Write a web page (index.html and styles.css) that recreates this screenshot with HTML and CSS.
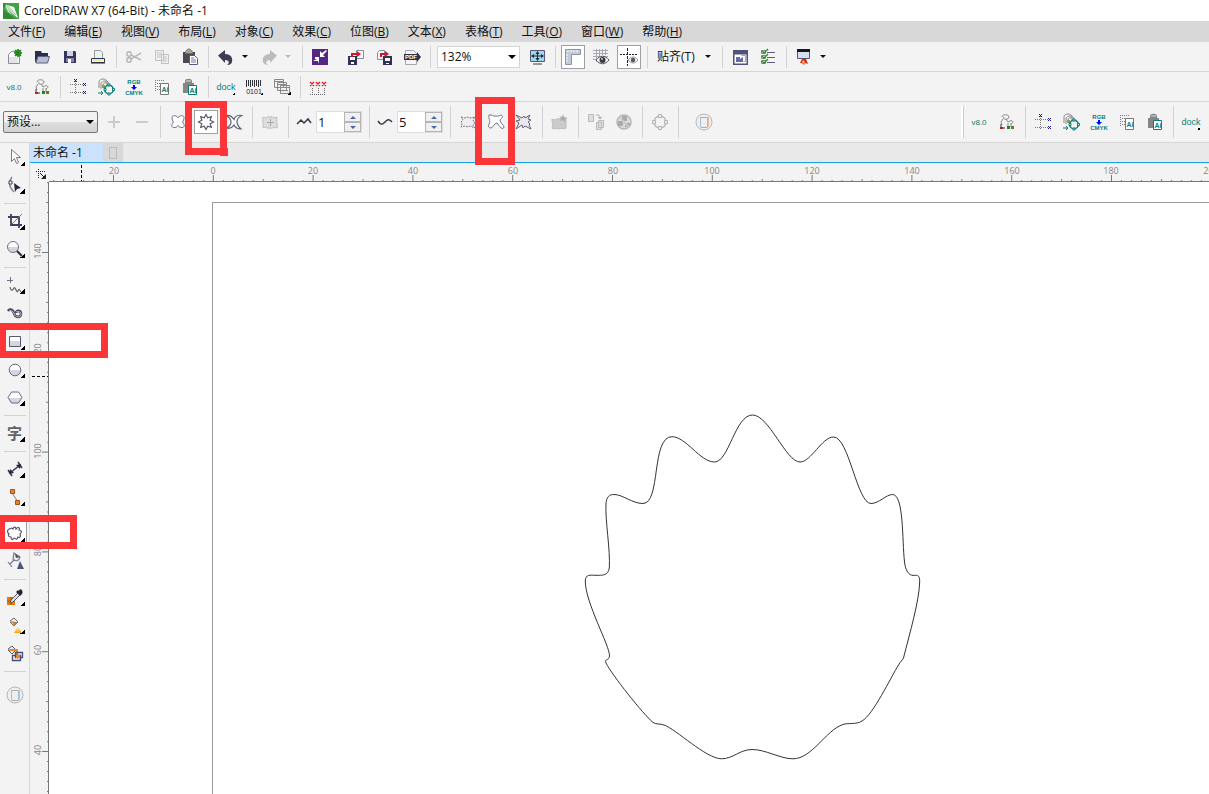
FILE: index.html
```html
<!DOCTYPE html>
<html lang="zh-CN">
<head>
<meta charset="utf-8">
<title>CorelDRAW X7 (64-Bit) - 未命名 -1</title>
<link rel="stylesheet" href="styles.css">
</head>
<body>
<svg class="sprite" aria-hidden="true">
  <defs>
    <linearGradient id="shade" x1="0" y1="0" x2="0" y2="1"><stop offset=".5" stop-color="#fff"/><stop offset=".5" stop-color="#d4d6e2"/></linearGradient>
    <linearGradient id="gold" x1="0" y1="0" x2="0" y2="1"><stop offset="0" stop-color="#fff"/><stop offset="1" stop-color="#f4a000"/></linearGradient>
    <pattern id="ticks-x" width="99.8" height="8" x="64" y="11" patternUnits="userSpaceOnUse">
      <path d="M.5 1v6M10.500 6v1M20.500 6v1M30.500 6v1M40.500 6v1M50.500 5v2M60.500 6v1M70.500 6v1M80.500 6v1M90.500 6v1" stroke="#777"/>
    </pattern>
    <pattern id="ticks-y" width="8" height="99.8" x="11" y="70" patternUnits="userSpaceOnUse">
      <path d="M1 .5h6M6 10.500h1M6 20.500h1M6 30.500h1M6 40.500h1M5 50.500h2M6 60.500h1M6 70.500h1M6 80.500h1M6 90.500h1" stroke="#777"/>
    </pattern>
  </defs>

  <symbol id="new" viewBox="0 0 18 18"><path d="M3.500 6.500l3-3h8v12h-11z" fill="#fff" stroke="#8c8c94"/><path d="M4 9h9v6H4z" fill="#e3e3e8"/><path d="M13 1l1 2 2-1-1 2 2 1-2 1 1 2-2-1-1 2-1-2-2 1 1-2-2-1 2-1-1-2 2 1z" fill="#1f8a16" stroke="#1f8a16"/></symbol>
  <symbol id="open" viewBox="0 0 18 18"><path d="M2 3h6l1 2h6v4H5l-3 6z" fill="#2c2c4c"/><path d="M5 8.500h11.500l-2 6.500H3z" fill="#b9bdd4" stroke="#60617f"/></symbol>
  <symbol id="save" viewBox="0 0 18 18"><path d="M3 3h11l1 1v11H3z" fill="#34345c"/><path d="M6 3h6v5H6z" fill="#cfd2e4"/><path d="M5 10h8v4H5z" fill="#8587a8"/><path d="M7 11h3v4H7z" fill="#fff"/></symbol>
  <symbol id="print" viewBox="0 0 18 18"><path d="M5.500 10V2.500h6l2 2V10" fill="#e8f4f4" stroke="#999"/><path d="M2.500 10.500h13v4h-13z" fill="#f4f4f4" stroke="#34344c"/><path d="M4 12h10" stroke="#e6db50"/><path d="M2 15h14" stroke="#24243c"/></symbol>
  <symbol id="cut" viewBox="0 0 18 18"><path d="M6 7l10 5M6 11l10-6" stroke="#bbb" stroke-width="1.600"/><circle cx="4" cy="6" r="2.200" fill="none" stroke="#b5b5b5" stroke-width="1.400"/><circle cx="4" cy="12" r="2.200" fill="none" stroke="#b5b5b5" stroke-width="1.400"/></symbol>
  <symbol id="copy" viewBox="0 0 18 18"><path d="M2.500 2.500h8v10h-8zM8.500 6.500h7v9h-7z" fill="#f0f0f0" stroke="#c0c0c0"/><path d="M4 5h5M4 7h4M4 9h4M10 9h4M10 11h4M10 13h4" stroke="#c4c4c4"/></symbol>
  <symbol id="paste" viewBox="0 0 18 18"><path d="M2 4h12v11H2z" fill="#4c4850"/><path d="M4.500 5.500c0-6 7-6 7 0z" fill="#a9a58c" stroke="#777"/><path d="M8.500 7.500h5l3 3v6h-8z" fill="#fff" stroke="#58588c"/><path d="M10 10h3M10 12h5M10 14h5" stroke="#7779a5"/></symbol>
  <symbol id="undo" viewBox="0 0 18 18"><path d="M1 7.500L8 2v4c6 0 8 4 7 8-1 3-4 3-5 3 3-2 2-5-2-5v3z" fill="currentColor"/></symbol>
  <symbol id="redo" viewBox="0 0 18 18"><path d="M17 7.500L10 2v4C4 6 2 10 3 14c1 3 4 3 5 3-3-2-2-5 2-5v3z" fill="currentColor"/></symbol>
  <symbol id="corner" viewBox="0 0 18 18"><path d="M1 1h16v16H1z" fill="#542783"/><path d="M9 3v6h5l-2-2 4-4-1-1-4 3zM8 9v7l-1-3H2l4-2H4V9z" fill="#fff"/></symbol>
  <symbol id="import" viewBox="0 0 18 18"><path d="M9.500 2.500h7v8h-7z" fill="#f6f6fa" stroke="#8b8ba0"/><path d="M1 8h9v9H1z" fill="#303058"/><path d="M3 9h5v3H3zM4 14h3v2H4z" fill="#fff"/><path d="M4 9V5h6V3l4 3-4 3V7H6v2z" fill="#d51928"/></symbol>
  <symbol id="export" viewBox="0 0 18 18"><path d="M2.500 4.500l2-2h5v9h-7z" fill="#f6f6fa" stroke="#8b8ba0"/><path d="M8 8h9v9H8z" fill="#303058"/><path d="M10 10h5v3h-5zM11 15h3v1h-3z" fill="#fff"/><path d="M5 9V5h5V3l4 3-4 3V7H7v2z" fill="#d51928"/></symbol>
  <symbol id="pdf" viewBox="0 0 18 18"><path d="M2.500 16.500v-14h8l3 3v11z" fill="#f6f6f8" stroke="#a5a5ad"/><path d="M1 6h13V4l4 5-4 5v-2H1z" fill="#303044"/></symbol>
  <symbol id="fullscreen" viewBox="0 0 18 18"><path d="M2.500 2.500h14v11h-14z" fill="#9fd8e8" stroke="#555875"/><path d="M5 15h9v2H5z" fill="#999"/><path d="M9.500 4v8M5 8h9" stroke="#24243c"/><path d="M7.500 6l2-3 2 3zM7.500 10l2 3 2-3zM6 6L3 8l3 2zM13 6l3 2-3 2z" fill="#24243c"/></symbol>
  <symbol id="rulers" viewBox="0 0 18 18"><path d="M1.500 1.500h15v5h-9v10h-6z" fill="#c3cada" stroke="#8c94aa"/><path d="M4 2v2M7 2v2M10 2v2M13 2v2M2 7h2M2 10h2M2 13h2" stroke="#fff"/></symbol>
  <symbol id="grid-eye" viewBox="0 0 18 18"><path d="M1 2.500h15M1 5.500h15M1 8.500h15M1 11.500h5M4.500 1v13M7.500 1v9M10.500 1v6M13.500 1v6" stroke="#a6a6b4"/><path d="M4 12c4-5 9-5 13 0-4 5-9 5-13 0z" fill="#f4f4f4" stroke="#555"/><circle cx="10.500" cy="12" r="3" fill="#383844"/><circle cx="10" cy="11" r="1" fill="#ccc"/></symbol>
  <symbol id="guide-eye" viewBox="0 0 18 18"><path d="M0 6.500h18" stroke="#222" stroke-dasharray="2 1"/><path d="M7.500 0v18" stroke="#222" stroke-dasharray="3 1"/><path d="M8 12c3-4 7-4 10 0-3 4-7 4-10 0z" fill="#eee" stroke="#999"/><circle cx="13" cy="12" r="2.200" fill="#55556a"/></symbol>
  <symbol id="launch" viewBox="0 0 18 18"><path d="M2 2h15v15H2z" fill="#50527a"/><path d="M3.500 6.500h12v9h-12z" fill="#fff"/><path d="M5 9h4v2l3-2v5H5z" fill="#676ca0"/><path d="M10.500 7.500h4v6h-2" fill="none" stroke="#9ba1c3"/></symbol>
  <symbol id="options" viewBox="0 0 18 18"><path d="M8 4.500h8M8 9.500h8M8 14.500h8" stroke="#5e5e80"/><path d="M2.500 2.500h4v3h-4zM2.500 7.500h4v3h-4zM2.500 12.500h4v3h-4z" fill="#fff" stroke="#888"/><path d="M3 3l2 2 4-4M3 8l2 2 4-4M3 13l2 2 4-4" fill="none" stroke="#278a20" stroke-width="1.300"/></symbol>
  <symbol id="display" viewBox="0 0 18 18"><path d="M2.500 1.500h12v9h-12z" fill="#d7ddee" stroke="#55566d"/><path d="M2 1h13v3H2z" fill="#15151f"/><path d="M5 15l2-4h4l2 5-3-1-1 2-2-2z" fill="#e22020"/><path d="M8 12l2 2-1 2-2-2z" fill="#ffcb2e"/></symbol>

  <symbol id="tree" viewBox="0 0 18 18"><path d="M4 4c0-3 7-3 7 0s-7 3-5 0M5 6l-2 3 1 3M8 6l2 3M10 9c4-3 7 0 3 2M10 10v3M13 10v4" fill="none" stroke="#888"/><path d="M3 11v4h4" fill="none" stroke="#777" stroke-width="1.500"/><path d="M2 14h3v2H2z" fill="#a22"/><path d="M9 13h3v3H9z" fill="#183"/><path d="M13 13h3v3h-3z" fill="#886c20"/></symbol>
  <symbol id="nodes" viewBox="0 0 18 18"><path d="M1 6.500h14M1 14.500h14M6.500 3v14" stroke="#777" stroke-dasharray="1 1"/><path d="M5 1l3 3M8 1L5 4M14 5l3 3M17 5l-3 3M14 13l3 3M17 13l-3 3" stroke="#15158a"/></symbol>
  <symbol id="contour" viewBox="0 0 18 18"><path d="M2 10V4c0-4 8-4 8 0v4M4 11V6c0-4 8-4 8 0M6 9V7c0-3 5-3 5 0" fill="none" stroke="#888"/><path d="M5 7h3v3H5z" fill="#9c9c3b"/><circle cx="12" cy="11.500" r="4.300" fill="none" stroke="#087f7b" stroke-width="1.600"/><path d="M1 15h5M4 13l2 2-2 2" fill="none" stroke="#087f7b"/><path d="M11 6h2v2h-2zM15.500 10.500h2v2h-2zM11 15h2v2h-2zM7 10.500h2v2H7z" fill="#f3f3f3" stroke="#087f7b"/></symbol>
  <symbol id="arrow-down" viewBox="0 0 18 18"><path d="M8 7h2v2h2l-3 3-3-3h2z" fill="#00f"/></symbol>
  <symbol id="copy-ai" viewBox="0 0 18 18"><path d="M2 2.500h9M2.500 4v10M4 5.500h3M4 8.500h3M4 11.500h3" stroke="#777" stroke-dasharray="1 1"/><path d="M7.500 5.500h8v11h-8z" fill="#fff" stroke="#777"/></symbol>
  <symbol id="paste-ai" viewBox="0 0 18 18"><path d="M2 5h11v10H2zM4 5V3c0-3 7-3 7 0v2z" fill="#858585"/><path d="M5 3h5" stroke="#ddd"/><path d="M7.500 7.500h8v9h-8z" fill="#fff" stroke="#087f7b"/></symbol>
  <symbol id="binary" viewBox="0 0 18 18"><path d="M1.500 2v7M3.500 2v6M5.500 2v7M7.500 2v6M9.500 2v7M11.500 2v6M13.500 2v7M15.500 2v6" stroke="#303038"/></symbol>
  <symbol id="stack" viewBox="0 0 18 18"><path d="M1.500 1.500h9v8h-9zM4.500 4.500h9v8h-9zM7.500 7.500h9v8h-9z" fill="#f3f3f3" stroke="#888"/><path d="M2 3.500h8M5 6.500h8M8 9.500h8M9 12l2 1M13 12l2 1" stroke="#888"/></symbol>
  <symbol id="red-x" viewBox="0 0 18 18"><path d="M1 4l4 4M5 4L1 8M7 4l4 4M11 4L7 8M13 4l4 4M17 4l-4 4" stroke="#f11212" stroke-width="1.200"/><path d="M1 16.500h16M3.500 10v6M9.500 10v6M15.500 10v6" stroke="#666" stroke-dasharray="1 1"/></symbol>

  <symbol id="plus" viewBox="0 0 18 18"><path d="M9 3v12M3 9h12" stroke="#ccc" stroke-width="2"/></symbol>
  <symbol id="minus" viewBox="0 0 18 18"><path d="M3 9h12" stroke="#ccc" stroke-width="2"/></symbol>
  <symbol id="pushpull" viewBox="0 0 18 18"><path d="M9 5C8 2 3 2 3 4.500c0 2 .5 3 1.500 4.500C3 11 2.500 12 3 13.500c1 2 5 1 6-1 1 2 5 3 6 1 .5-1.500 0-2.500-1.500-4.500C14.500 7.500 15 6.500 15 4.500 15 2 10 2 9 5z" fill="#fff" stroke="#6e7085"/></symbol>
  <symbol id="zipper" viewBox="0 0 18 18"><path d="M9 1.500l1.700 3.300 3.600-1.100-1.100 3.600L16.500 9l-3.300 1.700 1.100 3.600-3.600-1.100L9 16.500l-1.700-3.300-3.600 1.100 1.100-3.600L1.500 9l3.300-1.700-1.100-3.600 3.600 1.100z" fill="#fff" stroke="#55586e" stroke-width="1.200"/></symbol>
  <symbol id="twister" viewBox="0 0 18 18"><path d="M1 2.500c4-1 6 1 8 4 1-3 4-5 8-4-3 1-5 4-5 6.500 0 3 2 5 4 7-4 0-6-2-7-4-2 3-4 4-8 3 3-1 5-3 5-6S4 4 1 2.500z" fill="#fff" stroke="#5c5f76" stroke-width="1.200"/></symbol>
  <symbol id="center" viewBox="0 0 18 18"><path d="M2 4c3 2 4-1 7 0 3-1 4 2 7 0-1 4 1 7 0 11-3-2-4 1-7 0-3 1-4-2-7 0 1-4-1-7 0-11z" fill="#ddd" stroke="#c0c0c0"/><path d="M9.500 6v7M6 9.500h7" stroke="#aaa"/></symbol>
  <symbol id="amp" viewBox="0 0 18 18"><path d="M2 11l4-4 3 3 4-4 3 4" fill="none" stroke="#38384f" stroke-width="1.500"/></symbol>
  <symbol id="freq" viewBox="0 0 18 18"><path d="M2 8c3 5 5 3 7 1s4-4 7 0" fill="none" stroke="#38384f" stroke-width="1.500"/></symbol>
  <symbol id="random" viewBox="0 0 18 18"><path d="M2 4l4 1 2-1 3 1 5-1-2 3 1 2 1 1-2 2 2 3-5-2-2 1-3-1-4 1 1-3-1-2 2-2z" fill="#eee" stroke="#72748a" stroke-dasharray="2 1"/></symbol>
  <symbol id="smooth" viewBox="0 0 18 18"><path d="M2 2c3-1 4 2 7 1 2 1 4-1 5-1 3 1 1 3-1 5 0 3 4 5 4 7-1 4-5-1-7-4-3 0-4 5-6 5s-3-1-2-4c2-4-1-5 0-9z" fill="#fff" stroke="#72748a"/></symbol>
  <symbol id="local" viewBox="0 0 18 18"><path d="M1 2l6 3 2-2 1 2 5-3-2 4 3 1-3 2 2 2-1 1 2 4-6-3-2 2-1-3-6 4 3-6-3-2 4-1z" fill="#e9e9ee" stroke="#5f6179"/></symbol>
  <symbol id="convert" viewBox="0 0 18 18"><path d="M1 6c4 2 4-1 7 0 3-1 4 1 7 0v9c-3 2-4-1-7 1-3-2-4 1-7-1 2-3 0-5 0-9z" fill="#ccc" stroke="#bbb"/><path d="M12 1l1 3 4 1-3 1v3l-2-2-3 1 1-3-2-2 3 1z" fill="#aaa"/></symbol>
  <symbol id="copy-prop" viewBox="0 0 18 18"><path d="M1.500 1.500h5v7h-5zM9.500 9.500h5v7h-5zM11.500 7.500h5v7h-5z" fill="#ddd" stroke="#bbb"/><path d="M9 2c3 0 4 0 4 3M11 4l2 2 2-2" fill="none" stroke="#aaa"/></symbol>
  <symbol id="clear" viewBox="0 0 18 18"><circle cx="9" cy="9" r="7" fill="#ddd" stroke="#b7b7b7" stroke-width="1.500"/><path d="M7 3h5v5H7zM3 8h5v5H3zM10 10h5v4h-5z" fill="#aaa"/><path d="M4 4l10 10" stroke="#ccc" stroke-width="2"/></symbol>
  <symbol id="curve" viewBox="0 0 18 18"><circle cx="9" cy="9" r="6" fill="none" stroke="#bbb" stroke-width="1.500"/><path d="M7.500 1.500h3v3h-3zM1.500 7.500h3v3h-3zM13.500 7.500h3v3h-3zM7.500 13.500h3v3h-3z" fill="#eee" stroke="#b2b2b2"/></symbol>
  <symbol id="custom" viewBox="0 0 18 18"><circle cx="9" cy="9" r="8" fill="#eee" stroke="#b7b7b7"/><path d="M5.500 4v10.500M12.500 4v10.500" stroke="#9fc0d7"/><path d="M6 4.500h6M6 14.500h6" stroke="#b2aaa5"/><path d="M13.500 4v10" stroke="#e4bda0"/></symbol>

  <symbol id="pick" viewBox="0 0 18 18"><path d="M5.500 1.500v12l3-3 2 5 2-1-2-5h4z" fill="#fff" stroke="#77798e"/></symbol>
  <symbol id="shape" viewBox="0 0 18 18"><path d="M6 1c-4 5-3 10 2 15" fill="none" stroke="#868898" stroke-width="1.500"/><path d="M3 5h3v3H3z" fill="#fff" stroke="#444"/><path d="M8 7l7 5-4 1-2 3z" fill="#26263d"/></symbol>
  <symbol id="crop" viewBox="0 0 18 18"><path d="M5 2v11h11M2 5h11v11" fill="none" stroke="#40405a" stroke-width="1.800"/><path d="M6 12l10-10" stroke="#77798c"/></symbol>
  <symbol id="magnify" viewBox="0 0 18 18"><circle cx="7" cy="7" r="5.500" fill="url(#shade)" stroke="#717386"/><path d="M11 11l5 5" stroke="#333346" stroke-width="2.200"/></symbol>
  <symbol id="freehand" viewBox="0 0 18 18"><path d="M4.500 1v6M1 4.500h6" stroke="#707284"/><path d="M4 11c1 5 3 3 4 1s3 6 4 3 2-1 3 1" fill="none" stroke="#606276" stroke-width="1.200"/></symbol>
  <symbol id="artistic" viewBox="0 0 18 18"><path d="M2 7c2-3 5-1 6 2 1 5 7 5 7 1 0-4-5-4-5-1" fill="none" stroke="#44465c" stroke-width="2.600"/><path d="M3 7c2-1 4 0 5 2 1 5 7 5 7 1 0-3-4-3-5-2" fill="none" stroke="#d6d7e0" stroke-width=".8"/></symbol>
  <symbol id="rect" viewBox="0 0 18 18"><path d="M3.500 4.500h11v10h-11z" fill="url(#shade)" stroke="#55586e"/></symbol>
  <symbol id="ellipse" viewBox="0 0 18 18"><circle cx="9" cy="10" r="5.800" fill="url(#shade)" stroke="#696b7e"/></symbol>
  <symbol id="polygon" viewBox="0 0 18 18"><path d="M5.500 4h7l3.500 5.500-3.500 5.500h-7L2 9.500z" fill="url(#shade)" stroke="#696b7e"/></symbol>
  <symbol id="dimension" viewBox="0 0 18 18"><path d="M4 13L14 5" stroke="#383850" stroke-width="1.600"/><path d="M2 10l4 6M12 2l4 6" stroke="#383850" stroke-width="1.500"/><path d="M3 14l1-5 4 4zM15 4l-1 5-4-4z" fill="#26263d"/></symbol>
  <symbol id="connector" viewBox="0 0 18 18"><path d="M6 5l6 9" stroke="#777a92"/><path d="M4.500 1.500h4v4h-4zM9.500 12.500h4v4h-4z" fill="#f98200" stroke="#a34d2e"/></symbol>
  <symbol id="distort" viewBox="0 0 18 18"><path d="M3 5c2 0 2-2 4 0 1-3 3-2 3 0 3-3 4-1 3 1 4 1 2 3 1 4 1 3 0 4-2 3-1 4-3 1-4 1-2 3-3 1-3-1-3 0-3-2-2-3-2-2-2-4 0-5z" fill="#fff" stroke="#55586e" stroke-width="1.200"/></symbol>
  <symbol id="transparent" viewBox="0 0 18 18"><path d="M8 1l6 4c-1 4-4 5-7 2zM8 8l-4 4M2 10l4 5" fill="#ebebf0" stroke="#77798d" stroke-width="1.200"/><path d="M14 9l4 8h-7z" fill="#4e5678"/><path d="M9 2l5 3-4 1z" fill="#4b4d60"/></symbol>
  <symbol id="eyedropper" viewBox="0 0 18 18"><path d="M1 9h8v8H1z" fill="#ef7900"/><path d="M5 9v8M1 13h8" stroke="#b84c00"/><path d="M5 12l7-7 2 2-7 7-3 1z" fill="#dedfe6" stroke="#555"/><path d="M10 4l2-2 4 4-2 2zM13 3c1-4 5 0 3 3z" fill="#252535"/></symbol>
  <symbol id="fill" viewBox="0 0 18 18"><path d="M4 5l4-3 4 4-4 4-4-4c3 0 4 0 7 1" fill="#eee" stroke="#696b79"/><path d="M6 6l5 1-3 3z" fill="#e97a0c"/><path d="M12 10l4 7H8z" fill="url(#gold)"/></symbol>
  <symbol id="smart-fill" viewBox="0 0 18 18"><path d="M2 5l4-3 4 4-4 4-4-4c3 0 4 0 7 1" fill="#eee" stroke="#55576a"/><path d="M4 6h7v6" fill="none" stroke="#ef8520" stroke-width="2"/><path d="M6.500 11.500h8v5h-8zM9.500 8.500h7v5h-7z" fill="none" stroke="#484d76" stroke-width="1.300"/><path d="M10 11h4v3h-4z" fill="#f28315"/></symbol>
</svg>

<header class="titlebar">
  <svg class="logo" viewBox="0 0 16 16" role="img" aria-label="CorelDRAW"><path d="M0 0h16v16H0z" fill="#43a047"/><path d="M1 1l10 3 4 11L5 9z" fill="#f3faf2"/><path d="M1 1l11 12M3 1l10 11M2 5l11 9" stroke="#5ba957" stroke-width=".7"/><path d="M0 0h3l-1 5-2-1zM0 7l12 9H0z" fill="#348b35"/></svg>
  <span>CorelDRAW X7 (64-Bit) - 未命名 -1</span>
</header>

<nav class="menubar" aria-label="菜单">
  <button>文件(<u>F</u>)</button><button>编辑(<u>E</u>)</button><button>视图(<u>V</u>)</button><button>布局(<u>L</u>)</button><button>对象(<u>C</u>)</button><button>效果(<u>C</u>)</button><button>位图(<u>B</u>)</button><button>文本(<u>X</u>)</button><button>表格(<u>T</u>)</button><button>工具(<u>O</u>)</button><button>窗口(<u>W</u>)</button><button>帮助(<u>H</u>)</button>
</nav>

<div class="toolbar" role="toolbar" aria-label="标准">
  <button class="tool" aria-label="新建"><svg><use href="#new"/></svg></button>
  <button class="tool" aria-label="打开"><svg><use href="#open"/></svg></button>
  <button class="tool" aria-label="保存"><svg><use href="#save"/></svg></button>
  <button class="tool" aria-label="打印"><svg><use href="#print"/></svg></button>
  <i class="sep"></i>
  <button class="tool" aria-label="剪切"><svg><use href="#cut"/></svg></button>
  <button class="tool" aria-label="复制"><svg><use href="#copy"/></svg></button>
  <button class="tool" aria-label="粘贴"><svg><use href="#paste"/></svg></button>
  <i class="sep"></i>
  <button class="tool undo" aria-label="撤消"><svg><use href="#undo"/></svg></button>
  <button class="drop" aria-label="撤消列表"></button>
  <button class="tool muted" aria-label="重做"><svg><use href="#redo"/></svg></button>
  <button class="drop muted" aria-label="重做列表"></button>
  <i class="sep"></i>
  <button class="tool" aria-label="搜索内容"><svg><use href="#corner"/></svg></button>
  <i class="gap"></i>
  <button class="tool" aria-label="导入"><svg><use href="#import"/></svg></button>
  <button class="tool" aria-label="导出"><svg><use href="#export"/></svg></button>
  <button class="tool" aria-label="发布为 PDF"><svg><use href="#pdf"/><text x="8" y="11" class="glyph glyph-pdf">PDF</text></svg></button>
  <i class="sep"></i>
  <label class="combo zoom"><select aria-label="缩放级别"><option>132%</option><option>100%</option><option>200%</option></select></label>
  <button class="tool" aria-label="全屏预览"><svg><use href="#fullscreen"/></svg></button>
  <i class="sep"></i>
  <button class="tool pressed" aria-label="显示标尺"><svg><use href="#rulers"/></svg></button>
  <button class="tool" aria-label="显示网格"><svg><use href="#grid-eye"/></svg></button>
  <button class="tool pressed" aria-label="显示辅助线"><svg><use href="#guide-eye"/></svg></button>
  <i class="sep"></i>
  <button class="snap">贴齐(T)</button>
  <button class="drop" aria-label="贴齐列表"></button>
  <i class="sep"></i>
  <button class="tool" aria-label="欢迎屏幕"><svg><use href="#launch"/></svg></button>
  <button class="tool" aria-label="选项"><svg><use href="#options"/></svg></button>
  <i class="sep"></i>
  <button class="tool" aria-label="应用程序启动器"><svg><use href="#display"/></svg></button>
  <button class="drop" aria-label="启动器列表"></button>
</div>

<div class="toolbar" role="toolbar" aria-label="插件">
  <button class="tool" aria-label="版本"><svg><text x="9" y="12" class="glyph glyph-teal">v8.0</text></svg></button>
  <button class="tool" aria-label="结构"><svg><use href="#tree"/></svg></button>
  <i class="sep"></i>
  <button class="tool" aria-label="节点"><svg><use href="#nodes"/></svg></button>
  <button class="tool" aria-label="轮廓"><svg><use href="#contour"/></svg></button>
  <button class="tool" aria-label="颜色转换"><svg><text x="9" y="6" class="glyph glyph-rgb">RGB</text><use href="#arrow-down"/><text x="9" y="17" class="glyph glyph-rgb">CMYK</text></svg></button>
  <button class="tool" aria-label="复制到 Ai"><svg><use href="#copy-ai"/><text x="12" y="14" class="glyph glyph-ai">Ai</text></svg></button>
  <button class="tool" aria-label="从 Ai 粘贴"><svg><use href="#paste-ai"/><text x="12" y="15" class="glyph glyph-ai">Ai</text></svg></button>
  <i class="sep"></i>
  <button class="tool fly" aria-label="泊坞窗"><svg><text x="9" y="12" class="glyph glyph-dock">dock</text></svg></button>
  <button class="tool fly" aria-label="条码"><svg><use href="#binary"/><text x="9" y="16" class="glyph glyph-bin">0101</text></svg></button>
  <button class="tool fly" aria-label="窗口"><svg><use href="#stack"/></svg></button>
  <i class="sep"></i>
  <button class="tool" aria-label="标记"><svg><use href="#red-x"/></svg></button>
</div>

<div class="toolbar property" role="toolbar" aria-label="属性栏">
  <label class="combo preset"><select aria-label="预设"><option>预设...</option></select></label>
  <button class="tool" aria-label="添加预设"><svg><use href="#plus"/></svg></button>
  <button class="tool" aria-label="删除预设"><svg><use href="#minus"/></svg></button>
  <i class="sep"></i>
  <button class="tool" aria-label="推拉变形"><svg><use href="#pushpull"/></svg></button>
  <button class="tool pressed marked" aria-label="拉链变形"><svg><use href="#zipper"/></svg></button>
  <button class="tool" aria-label="扭曲变形"><svg><use href="#twister"/></svg></button>
  <i class="sep"></i>
  <button class="tool" aria-label="居中变形"><svg><use href="#center"/></svg></button>
  <i class="sep"></i>
  <label class="field-icon" for="amplitude" aria-label="拉链振幅"><svg><use href="#amp"/></svg></label>
  <span class="spin"><input id="amplitude" value="1"><span><button aria-label="增加振幅"></button><button aria-label="减少振幅"></button></span></span>
  <i class="sep"></i>
  <label class="field-icon" for="frequency" aria-label="拉链频率"><svg><use href="#freq"/></svg></label>
  <span class="spin"><input id="frequency" value="5"><span><button aria-label="增加频率"></button><button aria-label="减少频率"></button></span></span>
  <i class="sep"></i>
  <button class="tool" aria-label="随机变形"><svg><use href="#random"/></svg></button>
  <button class="tool marked-tall" aria-label="平滑变形"><svg><use href="#smooth"/></svg></button>
  <button class="tool" aria-label="局限变形"><svg><use href="#local"/></svg></button>
  <i class="sep"></i>
  <button class="tool" aria-label="添加新的变形"><svg><use href="#convert"/></svg></button>
  <i class="sep"></i>
  <button class="tool" aria-label="复制变形属性"><svg><use href="#copy-prop"/></svg></button>
  <button class="tool" aria-label="清除变形"><svg><use href="#clear"/></svg></button>
  <i class="sep"></i>
  <button class="tool" aria-label="转换为曲线"><svg><use href="#curve"/></svg></button>
  <i class="sep"></i>
  <i class="gap"></i>
  <button class="tool" aria-label="快速自定义"><svg><use href="#custom"/></svg></button>
  <div class="docked">
    <button class="tool" aria-label="版本"><svg><text x="9" y="12" class="glyph glyph-teal">v8.0</text></svg></button>
    <button class="tool" aria-label="结构"><svg><use href="#tree"/></svg></button>
    <i class="sep"></i>
    <button class="tool" aria-label="节点"><svg><use href="#nodes"/></svg></button>
    <button class="tool" aria-label="轮廓"><svg><use href="#contour"/></svg></button>
    <button class="tool" aria-label="颜色转换"><svg><text x="9" y="6" class="glyph glyph-rgb">RGB</text><use href="#arrow-down"/><text x="9" y="17" class="glyph glyph-rgb">CMYK</text></svg></button>
    <button class="tool" aria-label="复制到 Ai"><svg><use href="#copy-ai"/><text x="12" y="14" class="glyph glyph-ai">Ai</text></svg></button>
    <button class="tool" aria-label="从 Ai 粘贴"><svg><use href="#paste-ai"/><text x="12" y="15" class="glyph glyph-ai">Ai</text></svg></button>
    <i class="sep"></i>
    <button class="tool fly" aria-label="泊坞窗"><svg><text x="9" y="12" class="glyph glyph-dock">dock</text></svg></button>
  </div>
</div>

<main class="workspace">
  <div class="toolbox" role="toolbar" aria-label="工具箱">
    <button class="tool fly" aria-label="选择"><svg><use href="#pick"/></svg></button>
    <button class="tool fly" aria-label="形状"><svg><use href="#shape"/></svg></button>
    <i class="sep"></i>
    <button class="tool fly" aria-label="裁剪"><svg><use href="#crop"/></svg></button>
    <button class="tool fly" aria-label="缩放"><svg><use href="#magnify"/></svg></button>
    <i class="sep"></i>
    <button class="tool fly" aria-label="手绘"><svg><use href="#freehand"/></svg></button>
    <button class="tool" aria-label="艺术笔"><svg><use href="#artistic"/></svg></button>
    <button class="tool fly marked-rect" aria-label="矩形"><svg><use href="#rect"/></svg></button>
    <button class="tool fly" aria-label="椭圆形"><svg><use href="#ellipse"/></svg></button>
    <button class="tool fly" aria-label="多边形"><svg><use href="#polygon"/></svg></button>
    <i class="sep"></i>
    <button class="tool fly text-tool" aria-label="文本">字</button>
    <i class="sep"></i>
    <button class="tool fly" aria-label="平行度量"><svg><use href="#dimension"/></svg></button>
    <button class="tool fly" aria-label="连接器"><svg><use href="#connector"/></svg></button>
    <i class="sep"></i>
    <button class="tool fly pressed marked-distort" aria-label="变形"><svg><use href="#distort"/></svg></button>
    <button class="tool" aria-label="透明度"><svg><use href="#transparent"/></svg></button>
    <i class="sep"></i>
    <button class="tool fly" aria-label="颜色滴管"><svg><use href="#eyedropper"/></svg></button>
    <button class="tool fly" aria-label="交互式填充"><svg><use href="#fill"/></svg></button>
    <button class="tool" aria-label="智能填充"><svg><use href="#smart-fill"/></svg></button>
    <i class="sep"></i>
    <i class="gap"></i>
    <button class="tool" aria-label="快速自定义"><svg><use href="#custom"/></svg></button>
  </div>

  <section class="document">
    <div class="tabs"><button class="tab">未命名 -1</button><button class="tab-new" aria-label="新建标签"></button></div>
    <div class="origin"><svg viewBox="0 0 19 19" width="19" height="19"><path d="M8.500 6v9M6 8.500h9" stroke="#222" stroke-dasharray="1 1"/><path d="M10 10l5 5" stroke="#222"/><path d="M16 11v5h-5z" fill="#222"/></svg></div>
    <svg class="ruler-x" aria-label="水平标尺">
      <rect y="11" width="100%" height="8" fill="url(#ticks-x)"/>
      <path d="M32.500 2v16" class="cursor-mark"/>
      <text x="65" y="11">20</text><text x="164" y="11">0</text><text x="264" y="11">20</text><text x="364" y="11">40</text><text x="464" y="11">60</text><text x="564" y="11">80</text><text x="663" y="11">100</text><text x="763" y="11">120</text><text x="863" y="11">140</text><text x="963" y="11">160</text><text x="1062" y="11">180</text><text x="1162" y="11">200</text>
    </svg>
    <svg class="ruler-y" aria-label="垂直标尺">
      <rect x="11" width="8" height="100%" fill="url(#ticks-y)"/>
      <path d="M2 194.500h16" class="cursor-mark"/>
      <g transform="rotate(-90)"><text x="-69" y="11">140</text><text x="-169" y="11">120</text><text x="-269" y="11">100</text><text x="-369" y="11">80</text><text x="-468" y="11">60</text><text x="-568" y="11">40</text></g>
    </svg>
    <svg class="canvas" role="img" aria-label="绘图页面">
      <g transform="translate(-49 -182)">
        <path d="M212.500 4000V202.500H6000" fill="none" stroke="#999"/>
        <path fill="none" stroke="#333" d="M752.500 415C769 415 786 462 800 462C811 462 822 437 833.500 437C849 437 857 503.500 871 503.500C879 503.500 886 494.500 892.500 494.500C904 494.500 902 540 904.500 562C905.500 571 909 575.300 913 575.400C916 575.600 920 573.500 919.700 582C919 602 910 632 903.500 658C902 661 900.500 661 898.500 665C891 677 873 715 862 721C856 725 848 722.500 843 724.500C826 730 812 758.800 793 758.800C780 758.800 766 749.500 752 749.500C740 749.500 733 758.800 721.500 758.800C706 758.800 676 729 664 725C660 723.500 656 724.500 653 722.500C643 714 612 675 606 663C604 658.500 609 661 609.500 656C610 646 585 602 585.300 581C585.500 574 590 575.200 596 575.300C602 575.300 608 576 609.300 568C610.500 550 605 520 606 504C606.500 497 609 494.500 614 494.500C623 494.500 632 503.500 643 503.500C661 503.500 651 436.700 672 436.700C686 436.700 700 462 714.500 462C729 462 735 415 752.500 415Z"/>
      </g>
    </svg>
  </section>
</main>
</body>
</html>
```
FILE: styles.css
```css
*, *::before, *::after { box-sizing: border-box; }

body {
  margin: 0;
  height: 100vh;
  display: flex;
  flex-direction: column;
  overflow: hidden;
  background: #f3f3f3;
  color: #111;
  font: 12px/16px "Open Sans", "Noto Sans CJK SC", sans-serif;
}

button, input, select {
  margin: 0;
  padding: 0;
  border: 0;
  background: none;
  color: inherit;
  font: inherit;
}

.sprite { position: absolute; width: 0; height: 0; }

.titlebar {
  flex: none;
  display: flex;
  align-items: center;
  gap: 5px;
  height: 21px;
  padding-left: 3px;
  background: #fff;
}
.logo { width: 16px; height: 16px; }

.menubar {
  flex: none;
  display: flex;
  align-items: center;
  gap: 19px;
  height: 21px;
  padding-left: 8px;
  background: #d8d8d8;
}
.menubar button { white-space: nowrap; }

.toolbar {
  flex: none;
  display: flex;
  align-items: center;
  height: 30px;
  border-bottom: 1px solid #d6d6d6;
}
.toolbar.property { height: 41px; }

.tool {
  position: relative;
  flex: none;
  display: grid;
  place-items: center;
  width: 28px;
  height: 28px;
}
.tool svg, .field-icon svg { display: block; width: 18px; height: 18px; overflow: visible; }
.tool.pressed svg {
  box-sizing: content-box;
  padding: 2px;
  border: 1px solid #a0a0a0;
  background: #fff;
}
.undo { color: #3d3d55; }
.muted { color: #bbb; }

.sep { flex: none; width: 8px; height: 22px; }
.sep::before { content: ""; display: block; width: 1px; height: 100%; margin: 0 auto; background: #d2d2d2; }
.property .sep { height: 32px; }
.gap { flex: none; width: 8px; height: 6px; }

.drop { flex: none; width: 15px; height: 22px; padding-left: 2px; }
.drop::before {
  content: "";
  display: block;
  width: 6px;
  border: 3px solid transparent;
  border-top-color: currentColor;
  border-bottom: 0;
}

.fly::after {
  content: "";
  position: absolute;
  right: 5px;
  bottom: 6px;
  width: 3px;
  height: 3px;
  background: linear-gradient(135deg, transparent 50%, #000 50%);
}
.toolbox .fly::after { right: 4px; bottom: 5px; width: 5px; height: 5px; }

.combo { position: relative; flex: none; display: block; height: 22px; }
.combo::after {
  content: "";
  position: absolute;
  top: 9px;
  right: 4px;
  border: 4px solid transparent;
  border-top-color: #000;
  border-bottom: 0;
  pointer-events: none;
}
.combo select { appearance: none; width: 100%; height: 100%; padding-left: 3px; }
.zoom { width: 83px; margin: 0 3px; }
.zoom select { border: 1px solid #d4d4d4; background: #fff; }
.preset { width: 95px; margin: 0 2px 0 3px; }
.preset select {
  border: 1px solid #777;
  border-radius: 2px;
  background: linear-gradient(#f2f2f2 48%, #dedede 52%, #d2d2d2);
}
.snap { width: 50px; padding-left: 6px; text-align: left; white-space: nowrap; }
.snap + .drop { margin-right: 2px; padding-left: 4px; }

.field-icon { flex: none; display: grid; place-items: center; width: 24px; }
.spin {
  flex: none;
  display: flex;
  width: 46px;
  height: 22px;
  margin-right: 3px;
  border: 1px solid #ddd;
  background: #fff;
}
.spin input { width: 27px; padding-left: 1px; outline: 0; font-size: 13px; }
.spin span { display: grid; width: 17px; }
.spin span button { display: grid; place-items: center; border: 1px solid #b5b5b5; background: #f0f0f0; }
.spin span button::before { content: ""; border: 3px solid transparent; border-top: 0; border-bottom: 3px solid #4866ae; }
.spin span button + button::before { border-bottom: 0; border-top: 3px solid #4866ae; }

.docked { display: flex; align-items: center; margin-left: auto; padding: 0 4px 0 2px; border-left: 2px solid #fff; box-shadow: inset 1px 0 #ccc; }

.glyph { font-family: "Liberation Sans", Arial, sans-serif; text-anchor: middle; fill: #087f7b; }
.glyph-teal { font-size: 8px; }
.glyph-dock { font-size: 9px; }
.glyph-rgb { font-size: 6px; font-weight: bold; }
.glyph-ai { font-size: 7px; font-weight: bold; }
.glyph-bin { font-size: 7px; fill: #22223c; }
.glyph-pdf { font-size: 6px; font-weight: bold; fill: #fff; }

.workspace { flex: 1; min-height: 0; display: flex; }
.toolbox {
  flex: none;
  display: flex;
  flex-direction: column;
  width: 30px;
  border-right: 1px solid #d8d8d8;
}
.toolbox .tool { width: 29px; }
.toolbox .sep { width: 22px; height: 8px; margin-left: 4px; padding-top: 4px; }
.toolbox .sep::before { width: 100%; height: 1px; }
.text-tool { color: #62626c; font-size: 15px; font-weight: bold; }

.document {
  flex: 1;
  min-width: 0;
  display: grid;
  grid-template: 20px 19px 1fr / 19px 1fr;
}
.tabs {
  grid-column: 1 / -1;
  display: flex;
  border-bottom: 1px solid #13a5dc;
  background: #e9e9e9;
}
.tab { width: 73px; padding-left: 3px; background: #cce2fc; text-align: left; white-space: nowrap; }
.tab-new { display: grid; place-items: center; width: 20px; background: #d8d8d8; }
.tab-new::before { content: ""; width: 8px; height: 12px; border: 1px solid #bbb; }
.ruler-x, .ruler-y, .canvas { display: block; width: 100%; height: 100%; }
.ruler-x { border-bottom: 1px solid #777; }
.ruler-y { border-right: 1px solid #777; }
.ruler-x text, .ruler-y text { fill: #858585; font-size: 9px; text-anchor: middle; }
.cursor-mark { stroke: #000; stroke-dasharray: 3 2; }
.canvas { background: #fff; overflow: hidden; }

/* Red highlight frames around the tools being pointed out */
.marked::before, .marked-tall::before, .marked-rect::before, .marked-distort::before {
  content: "";
  position: absolute;
  z-index: 2;
  border: 7px solid #fb3538;
}
.marked::before { top: -7px; left: -7px; width: 42px; height: 54px; }
.marked::after { content: ""; position: absolute; z-index: 2; top: 40px; left: 28px; width: 8px; height: 8px; background: #fb3538; }
.marked-tall::before { top: -11px; left: -7px; width: 40px; height: 68px; }
.marked-rect::before { top: -4px; left: 0; width: 108px; height: 35px; border-left-width: 6px; }
.marked-distort::before { top: -4px; left: 0; width: 77px; height: 34px; border-left-width: 5px; }
```
